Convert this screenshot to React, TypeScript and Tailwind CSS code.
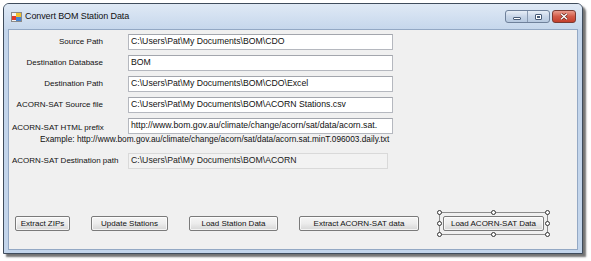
import React from 'react';

const FONT = { fontFamily: '"Liberation Sans", Arial, sans-serif' };

function TextBox({ value, width, disabled }: { value: string; width: number; disabled?: boolean }) {
  return (
    <div
      className={`h-[16px] flex items-center pl-[2px] border overflow-hidden whitespace-nowrap text-[8.7px] ${
        disabled ? 'bg-[#f2f2f2] border-[#d9d9d9] text-[#222]' : 'bg-white border-[#b5b8bf] border-t-[#a3a6ad] text-[#111]'
      }`}
      style={{ width }}
    >
      {value}
    </div>
  );
}

function Btn({ label, width }: { label: string; width: number }) {
  return (
    <div
      className="h-[15px] flex items-center justify-center rounded-[2px] border border-[#7a7a7a] bg-gradient-to-b from-[#f6f6f6] via-[#ececec] to-[#d6d6d6] text-[8px] text-[#111] shadow-[inset_0_0_0_1px_rgba(255,255,255,0.7)]"
      style={{ width }}
    >
      {label}
    </div>
  );
}

function Handle({ className }: { className: string }) {
  return <div className={`absolute w-[5px] h-[5px] rounded-full border border-[#333] bg-white ${className}`} />;
}

export default function App() {
  return (
    <div className="w-[591px] h-[261px] bg-white overflow-hidden" style={FONT}>
      <div className="pl-[3px] pt-[3px]">
        <div className="w-[580px] h-[251px] flex flex-col border border-[#3f4c5c] rounded-t-[6px] bg-[#c3d5eb] shadow-[3px_3px_2px_rgba(0,0,0,0.55)]">
          {/* title bar */}
          <div className="h-[25px] flex items-center pl-[7px] pr-[6px] rounded-t-[5px] bg-gradient-to-b from-[#dfe9f5] to-[#c6d7ec]">
            <svg width="11" height="10" viewBox="0 0 11 10" className="shrink-0">
              <rect x="0.5" y="0.5" width="10" height="9" fill="#f4f4f4" stroke="#8a8a8a" />
              <rect x="5" y="1" width="5" height="4" fill="#f2c230" />
              <rect x="1" y="4" width="4" height="4" fill="#e23a2a" />
              <rect x="5" y="5" width="5" height="4" fill="#4a84d0" />
            </svg>
            <span className="ml-[3px] text-[9px] text-[#111] tracking-[-0.1px]">Convert BOM Station Data</span>
            <div className="ml-auto self-start mt-[6px] flex gap-[2px]">
              <div className="w-[45px] h-[13px] flex rounded-[3px] border border-[#6f819b] bg-gradient-to-b from-[#e7eef7] via-[#c8d6e8] to-[#b7c9e0] overflow-hidden">
                <div className="flex-1 flex items-center justify-center border-r border-[#8a9bb2]">
                  <div className="w-[8px] h-[3px] mt-[3px] bg-white border border-[#485c78] rounded-[1px]" />
                </div>
                <div className="flex-1 flex items-center justify-center">
                  <div className="w-[7px] h-[6px] bg-white border border-[#485c78] rounded-[1px] flex items-center justify-center">
                    <div className="w-[3px] h-[2px] bg-[#485c78]" />
                  </div>
                </div>
              </div>
              <div className="w-[24px] h-[13px] flex items-center justify-center rounded-[3px] border border-[#7a3a33] bg-gradient-to-b from-[#e99a8c] via-[#d35a48] to-[#c43e2c]">
                <svg width="8" height="7" viewBox="0 0 8 7">
                  <path d="M1 0.8 L7 6.2 M7 0.8 L1 6.2" stroke="#5a1a12" strokeWidth="2.6" />
                  <path d="M1 0.8 L7 6.2 M7 0.8 L1 6.2" stroke="#fff" strokeWidth="1.5" />
                </svg>
              </div>
            </div>
          </div>

          {/* client area */}
          <div className="flex-1 mx-[4px] mb-[3px] border border-[#93a8c4] bg-[#f0f0f0] text-[8px] text-[#111]">
            <div className="pt-[4px] flex flex-col gap-[5px]">
              {[
                ['Source Path', 'C:\\Users\\Pat\\My Documents\\BOM\\CDO'],
                ['Destination Database', 'BOM'],
                ['Destination Path', 'C:\\Users\\Pat\\My Documents\\BOM\\CDO\\Excel'],
                ['ACORN-SAT Source file', 'C:\\Users\\Pat\\My Documents\\BOM\\ACORN Stations.csv'],
              ].map(([label, value]) => (
                <div key={label} className="flex items-center">
                  <div className="w-[119px] pr-[25px] text-right whitespace-nowrap">{label}</div>
                  <TextBox value={value} width={265} />
                </div>
              ))}
              <div className="flex items-center">
                <div className="w-[119px] pl-[3px] pt-[3px] whitespace-nowrap">ACORN-SAT HTML prefix</div>
                <TextBox value="http://www.bom.gov.au/climate/change/acorn/sat/data/acorn.sat." width={265} />
              </div>
            </div>
            <div className="h-[11px] pl-[31px] flex items-center whitespace-nowrap text-[8.3px]">
              Example: http://www.bom.gov.au/climate/change/acorn/sat/data/acorn.sat.minT.096003.daily.txt
            </div>
            <div className="mt-[8px] flex items-center">
              <div className="w-[119px] pl-[3px] whitespace-nowrap">ACORN-SAT Destination path</div>
              <TextBox value="C:\Users\Pat\My Documents\BOM\ACORN" width={260} disabled />
            </div>

            <div className="mt-[47px] ml-[6px] flex items-center">
              <Btn label="Extract ZIPs" width={55} />
              <div className="ml-[21px]"><Btn label="Update Stations" width={77} /></div>
              <div className="ml-[21px]"><Btn label="Load Station Data" width={89} /></div>
              <div className="ml-[21px]"><Btn label="Extract ACORN-SAT data" width={120} /></div>
              <div className="ml-[24px] relative">
                <Btn label="Load ACORN-SAT Data" width={101} />
                <div className="absolute left-[-4px] right-[-4px] top-[-4px] bottom-[-4px] border border-[#8c8c8c] pointer-events-none">
                  <Handle className="left-[-3px] top-[-3px]" />
                  <Handle className="left-[calc(50%-2.5px)] top-[-3px]" />
                  <Handle className="right-[-3px] top-[-3px]" />
                  <Handle className="left-[-3px] top-[calc(50%-2.5px)]" />
                  <Handle className="right-[-3px] top-[calc(50%-2.5px)]" />
                  <Handle className="left-[-3px] bottom-[-3px]" />
                  <Handle className="left-[calc(50%-2.5px)] bottom-[-3px]" />
                  <Handle className="right-[-3px] bottom-[-3px]" />
                </div>
              </div>
            </div>
          </div>
        </div>
      </div>
    </div>
  );
}
